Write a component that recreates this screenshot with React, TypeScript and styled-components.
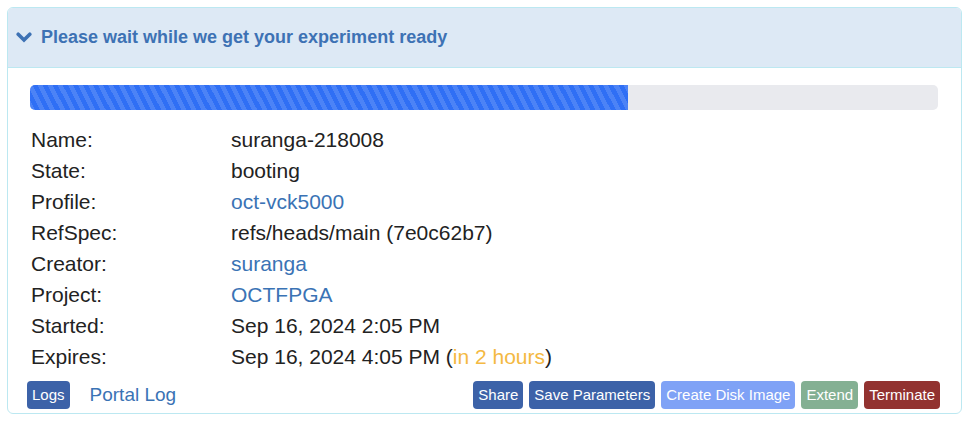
import React from "react";
import styled, { createGlobalStyle } from "styled-components";

const Global = createGlobalStyle`
  html, body { margin: 0; padding: 0; background: #fff; }
  body { font-family: "Liberation Sans", Arial, Helvetica, sans-serif; color: #222; }
`;

const Page = styled.div`
  padding: 7px 8px 0 7px;
`;

const Panel = styled.div`
  border: 1px solid #bce8f1;
  border-radius: 6px;
  overflow: hidden;
  background: #fff;
`;

const Heading = styled.div`
  height: 59px;
  display: flex;
  align-items: center;
  gap: 9px;
  padding: 0 8px;
  background: #dde9f5;
  border-bottom: 1px solid #bce8f1;
  color: #3d72b4;
  font-size: 18px;
  font-weight: 700;
`;

const Body = styled.div`
  padding: 17px 23px 4px 22px;
`;

const Progress = styled.div`
  height: 25px;
  border-radius: 5px;
  background: #e9eaee;
  overflow: hidden;
  margin-bottom: 14px;
`;

const Bar = styled.div`
  height: 100%;
  background-color: #2f6ff5;
  background-image: repeating-linear-gradient(
    63deg,
    rgba(255, 255, 255, 0.14) 0px,
    rgba(255, 255, 255, 0.14) 4.5px,
    transparent 4.5px,
    transparent 9px
  );
`;

const Rows = styled.div`
  display: grid;
  grid-template-columns: 200px 1fr;
  grid-auto-rows: 31px;
  align-items: center;
  font-size: 21px;
  padding-left: 1px;
`;

const Label = styled.div``;
const Value = styled.div``;

const Link = styled.a`
  color: #3a73b5;
  text-decoration: none;
`;

const Warn = styled.span`
  color: #f4b942;
`;

const Footer = styled.div`
  display: flex;
  align-items: center;
  margin-top: 9px;
  margin-left: -3px;
  margin-right: -2px;
`;

const Left = styled.div`
  display: flex;
  align-items: center;
  gap: 20px;
  flex: 1;
`;

const Right = styled.div`
  display: flex;
  align-items: center;
  gap: 6px;
`;

const Btn = styled.button<{ $bg: string }>`
  height: 28px;
  padding: 0 5px;
  border: none;
  border-radius: 4px;
  background: ${(p) => p.$bg};
  color: #fff;
  font-family: "Liberation Sans", Arial, sans-serif;
  font-size: 15px;
  line-height: 28px;
  cursor: pointer;
`;

const PortalLink = styled.a`
  color: #3a73b5;
  font-size: 19px;
  text-decoration: none;
`;

const Chevron = () => (
  <svg width="16" height="11" viewBox="0 0 16 11">
    <polyline
      points="2.2,2.2 8,8 13.8,2.2"
      fill="none"
      stroke="#3d72b4"
      strokeWidth="3.6"
      strokeLinecap="round"
      strokeLinejoin="miter"
    />
  </svg>
);

const rows: [string, React.ReactNode][] = [
  ["Name:", "suranga-218008"],
  ["State:", "booting"],
  ["Profile:", <Link href="#">oct-vck5000</Link>],
  ["RefSpec:", "refs/heads/main (7e0c62b7)"],
  ["Creator:", <Link href="#">suranga</Link>],
  ["Project:", <Link href="#">OCTFPGA</Link>],
  ["Started:", "Sep 16, 2024 2:05 PM"],
  [
    "Expires:",
    <>
      Sep 16, 2024 4:05 PM (<Warn>in 2 hours</Warn>)
    </>,
  ],
];

export default function App() {
  return (
    <>
      <Global />
      <Page>
        <Panel>
          <Heading>
            <Chevron />
            <span>Please wait while we get your experiment ready</span>
          </Heading>
          <Body>
            <Progress>
              <Bar style={{ width: "65.9%" }} />
            </Progress>
            <Rows>
              {rows.map(([l, v]) => (
                <React.Fragment key={l}>
                  <Label>{l}</Label>
                  <Value>{v}</Value>
                </React.Fragment>
              ))}
            </Rows>
            <Footer>
              <Left>
                <Btn $bg="#3c62a8">Logs</Btn>
                <PortalLink href="#">Portal Log</PortalLink>
              </Left>
              <Right>
                <Btn $bg="#3c62a8">Share</Btn>
                <Btn $bg="#3c62a8">Save Parameters</Btn>
                <Btn $bg="#7fa2f6">Create Disk Image</Btn>
                <Btn $bg="#84b093">Extend</Btn>
                <Btn $bg="#923230">Terminate</Btn>
              </Right>
            </Footer>
          </Body>
        </Panel>
      </Page>
    </>
  );
}
